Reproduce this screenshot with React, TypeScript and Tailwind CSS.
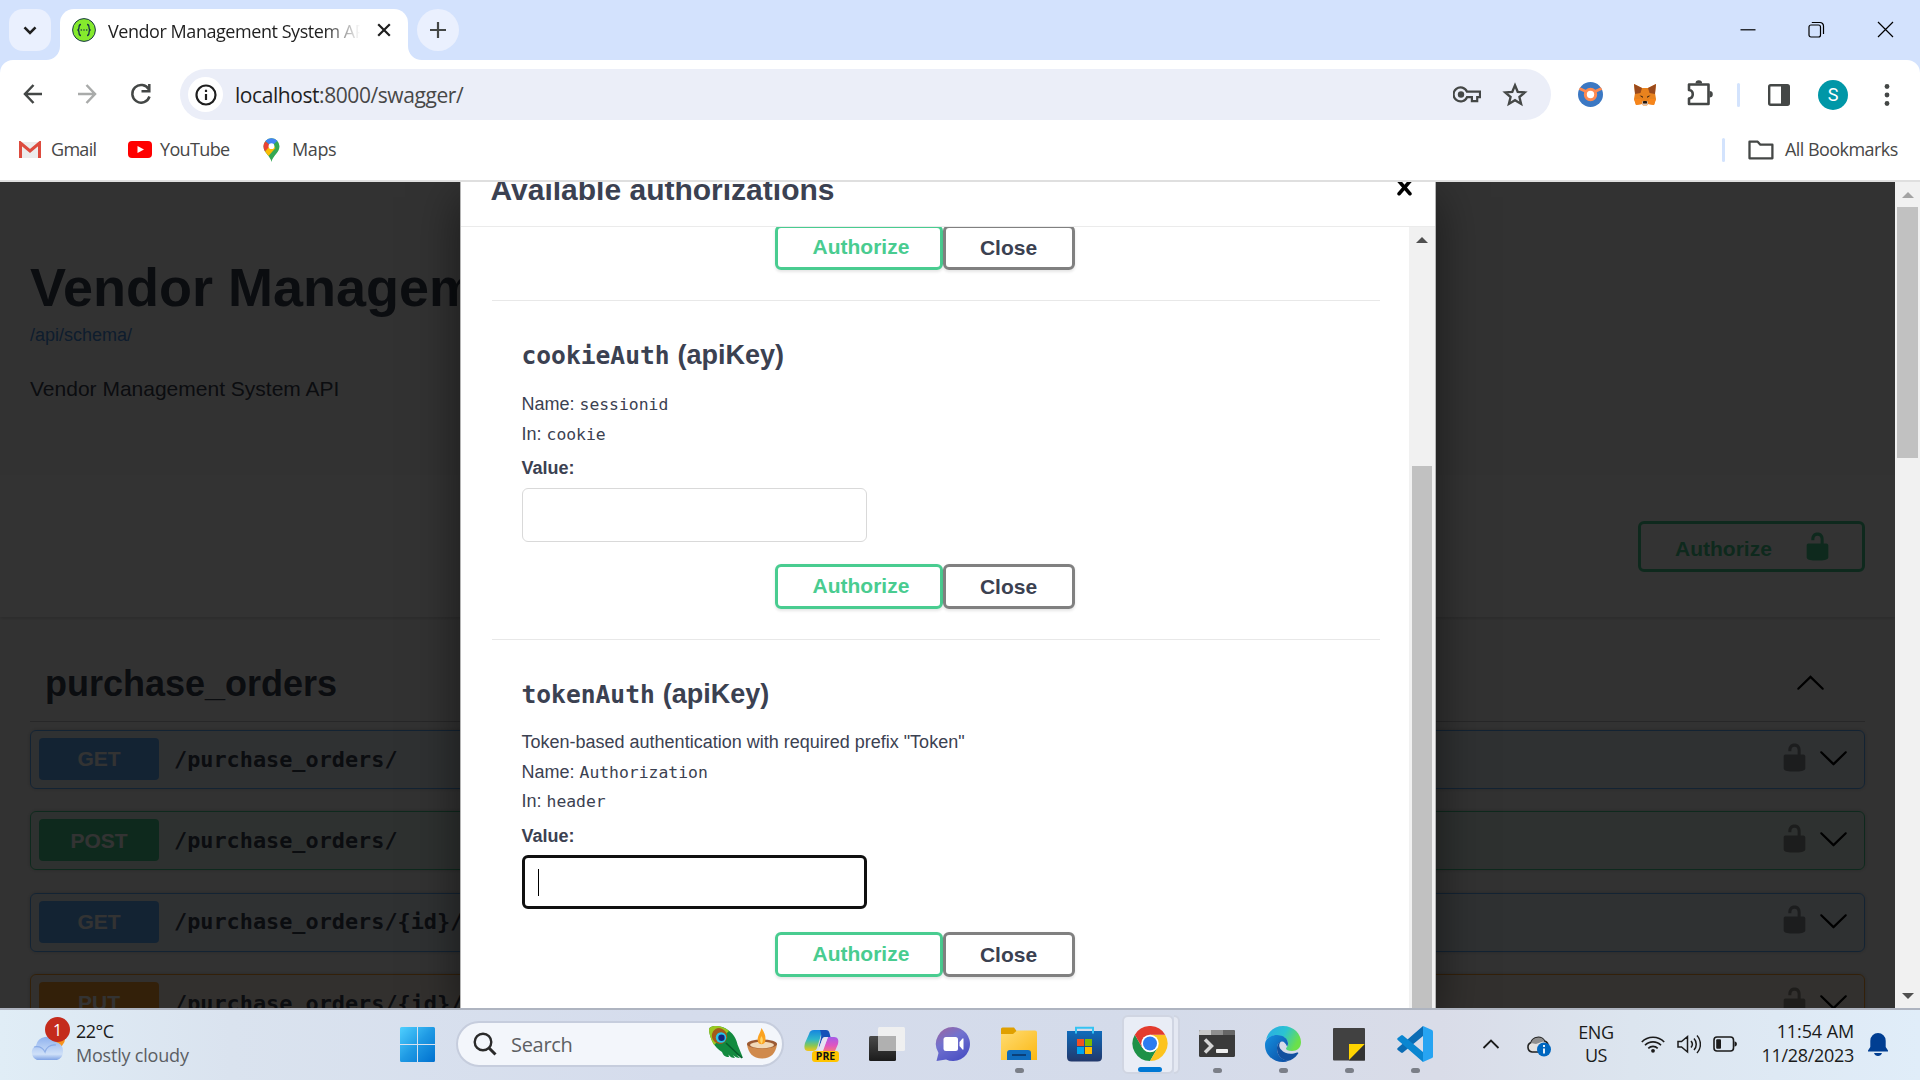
import React from "react";

const LOCK =
  "M15.8 8H14V5.6C14 2.703 12.665 1 10 1 7.334 1 6 2.703 6 5.6V6h2v-.801C8 3.754 8.797 3 10 3c1.203 0 2 .754 2 2.199V8H4c-.553 0-1 .646-1 1.199V17c0 .549.428 1.139.951 1.307l1.197.387C5.672 18.861 6.55 19 7.1 19h5.8c.549 0 1.428-.139 1.951-.307l1.196-.387c.524-.167.953-.757.953-1.306V9.199C17 8.646 16.352 8 15.8 8z";
const ARROW_DOWN =
  "M17.418 6.109c.272-.268.709-.268.979 0s.271.701 0 .969l-7.908 7.83c-.27.268-.707.268-.979 0l-7.908-7.83c-.27-.268-.271-.701 0-.969.271-.268.709-.268.979 0L10 13.25l7.418-7.141z";
const CLOSE =
  "M14.348 14.849c-0.469 0.469-1.229 0.469-1.697 0l-2.651-3.030-2.651 3.029c-0.469 0.469-1.229 0.469-1.697 0-0.469-0.469-0.469-1.229 0-1.697l2.758-3.15-2.759-3.152c-0.469-0.469-0.469-1.228 0-1.697s1.228-0.469 1.697 0l2.652 3.031 2.651-3.031c0.469-0.469 1.228-0.469 1.697 0s0.469 1.229 0 1.697l-2.758 3.152 2.758 3.15c0.469 0.469 0.469 1.229 0 1.698z";

function Glyph({ d, className }: { d: string; className: string }) {
  return (
    <svg viewBox="0 0 20 20" className={className} fill="currentColor">
      <path d={d} />
    </svg>
  );
}

/* ---------- Browser chrome ---------- */

function TabStrip() {
  return (
    <div className="flex h-[60px] bg-[#d3e2fd] pl-[9px] pt-[9px]">
      <div className="flex h-[42px] w-[42px] items-center justify-center rounded-[14px] bg-[#eaf0fe]">
        <svg viewBox="0 0 14 14" className="h-[14px] w-[14px]" fill="none" stroke="#1f1f1f" strokeWidth="2.6">
          <path d="M1.500 4.300 7 9.800l5.500-5.500" />
        </svg>
      </div>
      <div className="flex h-[51px] w-[9px] items-end">
        <svg viewBox="0 0 14 14" className="-ml-[5px] h-[14px] w-[14px] shrink-0" fill="#fff">
          <path d="M14 0v14H0C8 14 14 8 14 0z" />
        </svg>
      </div>
      <div className="flex h-[51px] w-[348px] rounded-t-[14px] bg-white pl-[12px]">
        <svg viewBox="0 0 24 24" className="mt-[9px] h-[24px] w-[24px]">
          <circle cx="12" cy="12" r="11.400" fill="#85ea2d" stroke="#173647" strokeWidth="1" />
          <path
            d="M9 6.500c-2 0-2 1-2 2.700 0 1.600-.2 2.800-1.600 2.800 1.400 0 1.600 1.200 1.600 2.800 0 1.700 0 2.700 2 2.700M15 6.500c2 0 2 1 2 2.700 0 1.600.2 2.800 1.600 2.800-1.400 0-1.600 1.200-1.600 2.800 0 1.700 0 2.700-2 2.700"
            fill="none"
            stroke="#173647"
            strokeWidth="1.300"
          />
          <g fill="#173647">
            <circle cx="9.300" cy="12" r=".8" />
            <circle cx="12" cy="12" r=".8" />
            <circle cx="14.700" cy="12" r=".8" />
          </g>
        </svg>
        <div className="ml-[12px] mt-[7px] h-[30px] w-[252px] overflow-hidden whitespace-nowrap bg-linear-to-r from-[#1f1f1f] from-86% to-transparent to-100% bg-clip-text text-[18px] leading-[30px] tracking-[-0.45px] text-transparent">
          Vendor Management System API
        </div>
        <svg viewBox="0 0 14 14" className="ml-[17px] mt-[14px] h-[14px] w-[14px]" stroke="#1f1f1f" strokeWidth="2.200">
          <path d="M1.200 1.200l11.600 11.600M12.800 1.200 1.200 12.800" />
        </svg>
      </div>
      <div className="flex h-[51px] w-[9px] items-end">
        <svg viewBox="0 0 14 14" className="h-[14px] w-[14px] shrink-0" fill="#fff">
          <path d="M0 0v14h14C6 14 0 8 0 0z" />
        </svg>
      </div>
      <div className="flex h-[42px] w-[42px] items-center justify-center rounded-full bg-[#eaf0fe]">
        <svg viewBox="0 0 16 16" className="h-[16px] w-[16px]" stroke="#444746" strokeWidth="2.200">
          <path d="M8 0v16M0 8h16" />
        </svg>
      </div>
      <div className="ml-auto mt-[12px] flex h-[18px] gap-[52px] pr-[26px]">
        <svg viewBox="0 0 17 17" className="h-[17px] w-[17px]" stroke="#000" strokeWidth="1.200">
          <path d="M1.500 8.800h15" />
        </svg>
        <svg viewBox="0 0 17 17" className="h-[17px] w-[17px]" fill="none" stroke="#000" strokeWidth="1.200">
          <rect x="1" y="4" width="11.500" height="12" rx="2" />
          <path d="M3.800 1.500H12a3.500 3.500 0 0 1 3.500 3.500v8" />
        </svg>
        <svg viewBox="0 0 17 17" className="h-[17px] w-[17px]" stroke="#000" strokeWidth="1.200">
          <path d="M1 1l15 15M16 1 1 16" />
        </svg>
      </div>
    </div>
  );
}

function Fox() {
  return (
    <svg viewBox="0 0 24 24" className="h-[24px] w-[24px]">
      <path d="M1 1l8 4h6l8-4-1 9 1 6-2 6-6-1-1 1.500h-4L9 21l-6 1-2-6 1-6z" fill="#e8821e" />
      <path d="M1 1l8 4-1.500 5L2 11zM23 1l-8 4 1.500 5 5.500 1z" fill="#9a4a1c" />
      <path d="M1 16h7l1 5-6 1zM23 16h-7l-1 5 6 1z" fill="#f6851b" />
      <path d="M6.500 12.500l3 .5.500 2zM17.500 12.500l-3 .5-.5 2z" fill="#3b2412" />
      <path d="M9 19l1-1h4l1 1-.5 3h-5z" fill="#d7c1b3" />
      <path d="M9.800 19l.7-1h3l.7 1-.4 1.500h-3.600z" fill="#20160f" />
    </svg>
  );
}

function Toolbar() {
  return (
    <div className="flex h-[60px] items-center bg-white pt-[9px] text-[#444746]">
      <svg viewBox="0 0 20 22" className="-mt-[1px] ml-[23px] h-[22px] w-[20px]" fill="none" stroke="currentColor" strokeWidth="2.500">
        <path d="M19 11H2.500M10.500 2 2 11l8.500 9" />
      </svg>
      <svg viewBox="0 0 20 22" className="-mt-[1px] ml-[34px] h-[22px] w-[20px] text-[#a9abaa]" fill="none" stroke="currentColor" strokeWidth="2.500">
        <path d="M1 11h16.500M9.500 2 18 11l-8.500 9" />
      </svg>
      <svg viewBox="0 0 22 22" className="-mt-[1px] ml-[33px] h-[22px] w-[22px]" fill="none" stroke="currentColor" strokeWidth="2.500">
        <path d="M18.800 6.500A8.800 8.800 0 1 0 19.500 13.500" />
        <path d="M19.300 1v7.300h-7.800" />
      </svg>
      <div className="ml-[28px] flex h-[51px] w-[1371px] items-center rounded-full bg-[#ebeef8]">
        <div className="ml-[8px] flex h-[35px] w-[35px] items-center justify-center rounded-full bg-white">
          <svg viewBox="0 0 22 22" className="h-[22px] w-[22px]">
            <circle cx="11" cy="11" r="9.500" fill="none" stroke="#1f1f1f" strokeWidth="2.200" />
            <path d="M11 10v6M11 5.800v2.200" stroke="#1f1f1f" strokeWidth="2.200" />
          </svg>
        </div>
        <div className="ml-[12px] whitespace-nowrap text-[21px] leading-[30px] tracking-[-0.43px] text-[#474747]">
          <span className="text-[#1f1f1f]">localhost</span>:8000/swagger/
        </div>
        <svg viewBox="0 0 28 17" className="ml-auto h-[17px] w-[28px]" fill="none" stroke="currentColor" strokeWidth="2.200">
          <path d="M14 5.700h13v5.500h-2.800v4h-5.300v-4H14A7 7 0 1 1 14 5.700z" />
          <circle cx="8" cy="8.500" r="3.200" fill="currentColor" stroke="none" />
        </svg>
        <svg viewBox="0 0 26 25" className="-mt-[1px] ml-[21px] mr-[23px] h-[25px] w-[26px] shrink-0" fill="none" stroke="currentColor" strokeWidth="2.300">
          <path d="M13 3.200l2.700 6.600 7.100.6-5.400 4.600 1.700 6.900L13 18.200l-6.100 3.700 1.700-6.900-5.400-4.600 7.100-.6z" />
        </svg>
      </div>
      <svg viewBox="0 0 25 25" className="ml-[27px] h-[25px] w-[25px]">
        <circle cx="12.500" cy="12.500" r="12.500" fill="#3b78c3" />
        <path d="M1.500 6.500 8 9.500M23.500 6.500 17 9.500" stroke="#ff8a50" strokeWidth="3" />
        <circle cx="12.500" cy="12.500" r="5.200" fill="#fff" stroke="#ff8a50" strokeWidth="3" />
      </svg>
      <div className="ml-[30px]">
        <Fox />
      </div>
      <svg viewBox="0 0 27 27" className="-mt-[4px] ml-[30px] h-[27px] w-[27px]">
        <path d="M2 5.500h19.500V25H2v-5.500c5-.5 5-8 0-8.500z" fill="none" stroke="#444746" strokeWidth="2.600" strokeLinejoin="round" />
        <path d="M8.500 4.500a3.300 3.300 0 0 1 6.600 0zM22.500 12a3.300 3.300 0 0 1 0 6.600z" fill="#444746" />
      </svg>
      <div className="ml-[23px] h-[24px] w-[3px] rounded-full bg-[#d3e3fd]" />
      <svg viewBox="0 0 22 22" className="ml-[28px] h-[22px] w-[22px]">
        <rect x="1.200" y="1.200" width="19.600" height="19.600" rx="1.500" fill="none" stroke="#444746" strokeWidth="2.400" />
        <path d="M13 1h8v20h-8z" fill="#444746" />
      </svg>
      <div className="ml-[28px] flex h-[30px] w-[30px] items-center justify-center rounded-full bg-[#0097a7] font-[Roboto] text-[18px] text-white">
        S
      </div>
      <svg viewBox="0 0 6 22" className="ml-[36px] h-[22px] w-[6px]" fill="currentColor">
        <circle cx="3" cy="2.500" r="2.400" />
        <circle cx="3" cy="11" r="2.400" />
        <circle cx="3" cy="19.500" r="2.400" />
      </svg>
    </div>
  );
}

function Bookmarks() {
  return (
    <div className="flex h-[62px] items-center border-b-2 border-[#dfdfdf] bg-white pb-[1px] text-[18px] leading-[28px] text-[#474747]">
      <svg viewBox="0 0 24 18" className="ml-[18px] h-[18px] w-[24px]">
        <path d="M1 1h22v16H1z" fill="#ececec" />
        <path d="M2.500 17V2L12 10l9.500-8v15" fill="none" stroke="#dd4b3e" strokeWidth="3" />
      </svg>
      <span className="-mt-[2px] ml-[9px] w-[46px] whitespace-nowrap tracking-[-0.700px]">Gmail</span>
      <svg viewBox="0 0 24 17" className="ml-[31px] h-[17px] w-[24px]">
        <rect width="24" height="17" rx="4" fill="#f00" />
        <path d="M9.500 5l6.500 3.500-6.500 3.500z" fill="#fff" />
      </svg>
      <span className="-mt-[2px] ml-[8px] w-[69px] whitespace-nowrap tracking-[-0.650px]">YouTube</span>
      <svg viewBox="0 0 17 24" className="ml-[34px] h-[24px] w-[17px]">
        <path d="M8.500 24C7.500 18 .5 15 .5 8.300a8 8 0 0 1 16 0C16.500 15 9.500 18 8.500 24z" fill="#34a853" />
        <path d="M.5 8.300A8 8 0 0 1 2.400 3.200L8.500 8.300 2 13.400A9 9 0 0 1 .5 8.300z" fill="#ea4335" />
        <path d="M2.100 13.500 8.500 6l4 4-7 8z" fill="#fbbc04" />
        <path d="M2.400 3.100A8 8 0 0 1 14.400 2.800L8.500 8.300z" fill="#4285f4" />
        <circle cx="8.500" cy="8.200" r="2.900" fill="#fff" />
      </svg>
      <span className="-mt-[2px] ml-[12px] whitespace-nowrap tracking-[-0.400px]">Maps</span>
      <div className="ml-auto h-[24px] w-[3px] rounded-full bg-[#d3e3fd]" />
      <svg viewBox="0 0 26 20" className="ml-[23px] h-[20px] w-[26px]" fill="none" stroke="#444746" strokeWidth="2.300" strokeLinejoin="round">
        <path d="M1.500 1.700h8.200l2.700 3h12v13.600h-22.900z" />
      </svg>
      <span className="-mt-[2px] ml-[11px] mr-[22px] w-[113px] whitespace-nowrap tracking-[-0.550px]">All Bookmarks</span>
    </div>
  );
}

/* ---------- API documentation page ---------- */

const METHODS = {
  GET: { row: "border-[#61affe] bg-[#61affe]/10", badge: "bg-[#61affe]" },
  POST: { row: "border-[#49cc90] bg-[#49cc90]/10", badge: "bg-[#49cc90]" },
  PUT: { row: "border-[#fca130] bg-[#fca130]/10", badge: "bg-[#fca130]" },
} as const;

function Operation({ method, path }: { method: keyof typeof METHODS; path: string }) {
  const m = METHODS[method];
  return (
    <div className={`mb-[22.4px] flex h-[59px] shrink-0 items-center rounded-[6px] border-[1.5px] pl-[8px] shadow-[0_0_4px_rgba(0,0,0,0.19)] ${m.row}`}>
      <div className={`-mt-[1px] flex h-[42px] w-[120px] items-center justify-center rounded-[4px] text-[21px] font-bold text-white ${m.badge}`}>
        {method}
      </div>
      <div className="ml-[15px] mt-[1px] font-['DejaVu_Sans_Mono',monospace] text-[21.850px] font-bold text-[#3b4151]">{path}</div>
      <Glyph d={LOCK} className="-mt-[5px] ml-auto mr-px h-[31px] w-[31px] text-black/40" />
      <Glyph d={ARROW_DOWN} className="-mt-[4px] ml-[7px] mr-[15px] h-[31px] w-[31px] text-black" />
    </div>
  );
}

function ApiDocs() {
  return (
    <div className="flex h-full flex-col bg-[#fafafa] font-['Liberation_Sans',Arial,sans-serif] text-[#3b4151]">
      <div className="px-[30px] pt-[75px]">
        <h2 className="text-[54px] font-bold leading-[60px]">Vendor Management System API</h2>
        <div className="mt-[6px] text-[18px] leading-[24px] text-[#4990e2]">/api/schema/</div>
        <p className="mt-[27px] text-[21px] leading-[30px]">Vendor Management System API</p>
      </div>
      <div className="mt-[71px] flex h-[142px] shrink-0 items-start justify-end bg-white pr-[30px] pt-[46px] shadow-[0_1.5px_3px_rgba(0,0,0,0.15)]">
        <div className="flex h-[51px] w-[227px] items-center rounded-[6px] border-[3px] border-[#49cc90] pl-[34px] text-[21px] font-bold text-[#49cc90]">
          <span className="mt-[4px] w-[97px]">Authorize</span>
          <Glyph d={LOCK} className="ml-[30px] h-[31px] w-[31px]" />
        </div>
      </div>
      <div className="flex flex-col px-[30px] pt-[38px]">
        <div className="flex h-[67px] shrink-0 items-start justify-between border-b-[1.5px] border-[#3b4151]/30 pl-[15px] pr-[39px]">
          <h3 className="mt-[8px] text-[36px] font-bold leading-[42px]">purchase_orders</h3>
          <Glyph d={ARROW_DOWN} className="mt-[13px] h-[31px] w-[31px] rotate-180 text-black" />
        </div>
        <div className="mt-[8px] flex flex-col">
          <Operation method="GET" path="/purchase_orders/" />
          <Operation method="POST" path="/purchase_orders/" />
          <Operation method="GET" path="/purchase_orders/{id}/" />
          <Operation method="PUT" path="/purchase_orders/{id}/" />
        </div>
      </div>
    </div>
  );
}

function DialogButtons({ className }: { className: string }) {
  return (
    <div className={`ml-[253px] flex h-[45px] text-[21px] font-bold ${className}`}>
      <div className="flex h-[45px] w-[168px] items-center rounded-[6px] border-[3px] border-[#49cc90] pb-[2px] pl-[35px] text-[#49cc90] shadow-[0_1.5px_3px_rgba(0,0,0,0.1)]">
        Authorize
      </div>
      <div className="flex h-[45px] w-[132px] items-center justify-center rounded-[6px] border-[3px] border-[#808080] shadow-[0_1.5px_3px_rgba(0,0,0,0.1)]">
        Close
      </div>
    </div>
  );
}

function Mono({ children }: { children: React.ReactNode }) {
  return <span className="ml-[5px] font-['DejaVu_Sans_Mono',monospace] text-[16.400px]">{children}</span>;
}

function SchemeTitle({ name }: { name: string }) {
  return (
    <h4 className="flex h-[36px] items-baseline text-[27px] font-bold leading-[36px]">
      <span className="font-['DejaVu_Sans_Mono',monospace] text-[24.600px]">{name}</span>
      <span className="ml-[8px]">(apiKey)</span>
    </h4>
  );
}

function AuthDialog() {
  return (
    <div className="flex h-full w-[976px] flex-col overflow-hidden border-x border-[#b5b5b5] bg-white text-[#3b4151] shadow-[0_15px_45px_rgba(0,0,0,0.5)]">
      <div className="flex h-[45px] shrink-0 items-start justify-between border-b border-[#ebebeb] pl-[30px] pr-[15px]">
        <h3 className="-mt-[10px] text-[30px] font-bold leading-[36px]">Available authorizations</h3>
        <Glyph d={CLOSE} className="-mt-[10px] h-[31px] w-[31px] text-black" />
      </div>
      <div className="flex min-h-0 flex-1">
        <div className="flex-1 overflow-hidden pl-[31px] pr-[29px] text-[18px] leading-[30px]">
          <section className="flow-root h-[74px] border-b border-[#e8e8e8] pl-[30px]">
            <DialogButtons className="-mt-[2px]" />
          </section>
          <section className="h-[339px] border-b border-[#e8e8e8] pl-[30px] pt-[36px]">
            <SchemeTitle name="cookieAuth" />
            <p className="mt-[16px]">Name:<Mono>sessionid</Mono></p>
            <p className="-mt-[1px]">In:<Mono>cookie</Mono></p>
            <p className="mt-[3px] font-bold">Value:</p>
            <div className="mt-[5px] h-[54px] w-[345px] rounded-[6px] border-[1.500px] border-[#d9d9d9]" />
            <DialogButtons className="mt-[22px]" />
          </section>
          <section className="pl-[30px] pt-[36px]">
            <SchemeTitle name="tokenAuth" />
            <p className="mt-[15px]">Token-based authentication with required prefix "Token"</p>
            <p>Name:<Mono>Authorization</Mono></p>
            <p className="-mt-[2px]">In:<Mono>header</Mono></p>
            <p className="mt-[4px] font-bold">Value:</p>
            <div className="mt-[4px] flex h-[54px] w-[345px] items-center rounded-[6px] border-[3px] border-[#101010] pl-[13px]">
              <div className="h-[27px] w-[1px] bg-black" />
            </div>
            <DialogButtons className="mt-[23px]" />
          </section>
        </div>
        <div className="flex w-[26px] flex-col items-center bg-[#f1f1f1]">
          <div className="mt-[10px] h-0 w-0 border-x-[6px] border-b-[6px] border-x-transparent border-b-[#505050]" />
          <div className="mt-[223px] w-[20px] flex-1 bg-[#c1c1c1]" />
        </div>
      </div>
    </div>
  );
}

function Viewport() {
  return (
    <div className="flex h-[826px] overflow-hidden">
      <div className="relative h-full w-[1895px] overflow-hidden">
        <ApiDocs />
        <div className="absolute inset-0 flex justify-center bg-black/80 font-['Liberation_Sans',Arial,sans-serif]">
          <AuthDialog />
        </div>
      </div>
      <div className="flex w-[25px] flex-col items-center bg-[#f1f1f1]">
        <div className="mt-[10px] h-0 w-0 border-x-[6px] border-b-[6px] border-x-transparent border-b-[#a3a3a3]" />
        <div className="mt-[9px] h-[251px] w-[21px] bg-[#c1c1c1]" />
        <div className="mb-[9px] mt-auto h-0 w-0 border-x-[6px] border-t-[6px] border-x-transparent border-t-[#505050]" />
      </div>
    </div>
  );
}

/* ---------- Taskbar ---------- */

function Weather() {
  return (
    <div className="flex w-[400px] pl-[28px] pt-[5px]">
      <div className="relative h-[48px] w-[38px]">
        <svg viewBox="0 0 38 48" className="h-[48px] w-[38px]">
          <defs>
            <linearGradient id="cloud" x1="0" y1="0" x2="0" y2="1">
              <stop offset="0" stopColor="#8fb2ee" />
              <stop offset=".75" stopColor="#cfe0f8" />
              <stop offset="1" stopColor="#7fa3e4" />
            </linearGradient>
          </defs>
          <circle cx="28" cy="24" r="9" fill="#f7941d" />
          <path d="M9 45a8 8 0 0 1-1-14.500A11 11 0 0 1 28 27a9.500 9.500 0 0 1 1 18z" fill="url(#cloud)" />
          <path d="M6 32c5-1 9 1 11 5 1-4 5-8 11-7" fill="none" stroke="#6d94dd" strokeWidth="1.200" opacity=".6" />
        </svg>
        <div className="absolute left-[17px] top-[2px] flex h-[25px] w-[25px] items-center justify-center rounded-full bg-[#c42b1c] text-[16px] text-white">
          1
        </div>
      </div>
      <div className="ml-[10px] pt-[4px] text-[18px] leading-[24px]">
        <div className="tracking-[-0.500px] text-[#1b1b1b]">22°C</div>
        <div className="whitespace-nowrap tracking-[-0.200px] text-[#5b5e63]">Mostly cloudy</div>
      </div>
    </div>
  );
}

function StartLogo() {
  return (
    <svg viewBox="0 0 35 35" className="h-[35px] w-[35px]">
      <defs>
        <linearGradient id="win" x1="0" y1="0" x2="1" y2="1">
          <stop offset="0" stopColor="#4fd0ff" />
          <stop offset=".5" stopColor="#1f9ae4" />
          <stop offset="1" stopColor="#0070cf" />
        </linearGradient>
      </defs>
      <path d="M0 1.500Q0 0 1.500 0H17v17H0zM18 0h15.500Q35 0 35 1.500V17H18zM0 18h17v17H1.500Q0 35 0 33.500zM18 18h17v15.500Q35 35 33.500 35H18z" fill="url(#win)" />
    </svg>
  );
}

function SearchBox() {
  return (
    <div className="flex h-[46px] w-[328px] items-center rounded-full border-2 border-[#c6cddd] bg-[#f3f6fb] pl-[15px]">
      <svg viewBox="0 0 24 24" className="h-[24px] w-[24px]" fill="none" stroke="#2a2a2a" strokeWidth="2.400">
        <circle cx="10" cy="10" r="8.300" />
        <path d="M16 16l6.500 6.500" strokeWidth="3" />
      </svg>
      <span className="ml-[14px] mt-[1px] text-[20px] tracking-[-0.300px] text-[#5d5f63]">Search</span>
      <svg viewBox="0 0 34 34" className="-mt-[3px] ml-auto h-[34px] w-[34px]">
        <path
          d="M0 4C0 1 3 0 7 0c7 0 14 4 18 10 2 3 3 6 3.500 8.500L32 27l2 5-6-3 3 3c-3 0-5-1-7-3l2 3c-3 0-5-1-6.500-3.500L20 31c-4 0-6-2-7-5C5 21 1 13 0 4z"
          fill="#128a3f"
        />
        <path d="M0 4C0 1 3 0 7 0c5 0 10 2 13 5L5 19C2 14 .5 9 0 4z" fill="#9cc820" />
        <ellipse cx="10.500" cy="10" rx="7.500" ry="8" fill="#a35a1a" transform="rotate(-30 10.500 10)" />
        <circle cx="12" cy="11.500" r="5.200" fill="#27c6e8" />
        <circle cx="12.500" cy="11.800" r="3.200" fill="#10257e" />
        <path d="M17 17l16 15" stroke="#075c2b" strokeWidth="1.500" />
      </svg>
      <svg viewBox="0 0 32 32" className="ml-[3px] mr-[4px] h-[32px] w-[32px]">
        <path d="M1 16c1 9 6 14.500 15 14.500S30 25 31 16z" fill="#d08a4c" />
        <ellipse cx="16" cy="16" rx="15" ry="4.500" fill="#9b5a33" />
        <ellipse cx="16" cy="17" rx="12" ry="3.200" fill="#f1d9b8" />
        <path d="M15.500 0c3 5 5 9 3.500 14-1 3-6 3-7 0-1.500-5 2-8 3.500-14z" fill="#fba321" />
        <path d="M15.500 8c1.500 3 2 5 0 8-2-3-1.500-5 0-8z" fill="#ffd76a" />
      </svg>
    </div>
  );
}

function Copilot() {
  return (
    <svg viewBox="0 0 36 36" className="ml-[2px] h-[36px] w-[36px]">
      <defs>
        <linearGradient id="cpA" x1="0" y1="0" x2="0" y2="1">
          <stop offset="0" stopColor="#1685e0" />
          <stop offset=".45" stopColor="#2fb7c9" />
          <stop offset=".75" stopColor="#8cc751" />
          <stop offset="1" stopColor="#f5c518" />
        </linearGradient>
        <linearGradient id="cpB" x1="0" y1="0" x2="0" y2="1">
          <stop offset="0" stopColor="#a45be8" />
          <stop offset=".5" stopColor="#e055c0" />
          <stop offset="1" stopColor="#ff8a5c" />
        </linearGradient>
      </defs>
      <path d="M10 4h12c-3 0-4 2-5 5l-4 13c-.5 2-2 3-4 3H4c-4 0-4-4-3-8L5 8c1-3 2-4 5-4z" fill="url(#cpA)" />
      <path d="M16 4h6c2 0 3 1 3.500 3l1 4h-5c-2 0-3 1-3.500 3l-3 8c0-5 3-10 2-14-.3-2-.5-3-1-4z" fill="#1451b8" />
      <path d="M24 11h6c4 0 5 3 4 7l-3 7c-1 2-2 3-4 3H15c2 0 3-2 3.500-4z" fill="url(#cpB)" />
      <path d="M18 13.500q.7-2.500 3-2.500h3l-5 14h-5z" fill="#e6e4f2" />
      <rect x="8" y="25" width="27" height="11" rx="3" fill="#ffc400" />
      <text x="21.500" y="34.200" textAnchor="middle" fontFamily="'Open Sans',sans-serif" fontWeight="700" fontSize="10.500" fill="#111">PRE</text>
    </svg>
  );
}

function TaskView() {
  return (
    <svg viewBox="0 0 36 36" className="h-[36px] w-[36px]">
      <defs>
        <linearGradient id="tv" x1="0" y1="0" x2="0" y2="1">
          <stop offset="0" stopColor="#4a4a4a" />
          <stop offset="1" stopColor="#1b1b1b" />
        </linearGradient>
      </defs>
      <rect x="0" y="10" width="27" height="25" rx="1.500" fill="url(#tv)" />
      <rect x="9" y="1" width="27" height="24" rx="1.500" fill="#f0f0f0" opacity=".95" />
      <path d="M9 10h18v15H10.500Q9 25 9 23.500z" fill="#b0b0b0" />
    </svg>
  );
}

function Chat() {
  return (
    <svg viewBox="0 0 36 36" className="h-[36px] w-[36px]">
      <defs>
        <linearGradient id="chat" x1="0" y1="0" x2=".6" y2="1">
          <stop offset="0" stopColor="#a0639a" />
          <stop offset=".45" stopColor="#7272cf" />
          <stop offset="1" stopColor="#4d52c4" />
        </linearGradient>
      </defs>
      <path d="M18 1a17 17 0 1 1-7 32.500L1.500 35l2-8A17 17 0 0 1 18 1z" fill="url(#chat)" />
      <rect x="8.500" y="11" width="14.500" height="14" rx="2.500" fill="#fff" />
      <path d="M24.500 16l3-3.500q1-.8 1 .5v10q0 1.300-1 .5l-3-3.500z" fill="#fff" />
    </svg>
  );
}

function Explorer() {
  return (
    <svg viewBox="0 0 36 36" className="h-[36px] w-[36px]">
      <defs>
        <linearGradient id="fold" x1="0" y1="0" x2="1" y2="1">
          <stop offset="0" stopColor="#ffdc73" />
          <stop offset="1" stopColor="#fbb813" />
        </linearGradient>
      </defs>
      <path d="M0 3q0-1.500 1.500-1.500H13l3 4-3 4H0z" fill="#e0a000" />
      <path d="M0 8h12l4-3.500h18q2 0 2 2V34H0z" fill="url(#fold)" />
      <path d="M6 34v-7q0-3 3-3h18q3 0 3 3v7z" fill="#0f6cbd" />
      <path d="M11 29h14" stroke="#0a3f78" strokeWidth="2" />
    </svg>
  );
}

function Store() {
  return (
    <svg viewBox="0 0 36 36" className="h-[36px] w-[36px]">
      <defs>
        <linearGradient id="store" x1="0" y1="0" x2="0" y2="1">
          <stop offset="0" stopColor="#0f6bbb" />
          <stop offset="1" stopColor="#22386b" />
        </linearGradient>
      </defs>
      <path d="M0 5h35v26q0 4.500-4.500 4.500h-26Q0 35.500 0 31z" fill="url(#store)" />
      <path d="M9 7.500V1.800h17V7.500" fill="none" stroke="#35c3f3" strokeWidth="2" />
      <path d="M10 13h7v7h-7z" fill="#f25022" />
      <path d="M18 13h7v7h-7z" fill="#7fba00" />
      <path d="M10 21h7v7h-7z" fill="#00a4ef" />
      <path d="M18 21h7v7h-7z" fill="#ffb900" />
    </svg>
  );
}

function Chrome() {
  return (
    <svg viewBox="0 0 36 36" className="ml-[4px] h-[36px] w-[36px]">
      <path d="M2.400 9A18 18 0 0 0 18 36l7.800-13.500H10.200z" fill="#1e9147" />
      <path d="M33.600 9A18 18 0 0 1 18 36l7.800-13.500L18 9z" fill="#fcc31e" />
      <path d="M18 9h15.600A18 18 0 0 0 2.400 9l7.800 13.500z" fill="#e33b2e" />
      <circle cx="18" cy="18" r="9" fill="#fff" />
      <circle cx="18" cy="18" r="7.200" fill="#2d7cf0" />
    </svg>
  );
}

function Terminal() {
  return (
    <svg viewBox="0 0 36 36" className="h-[36px] w-[36px]">
      <rect y="4" width="36" height="27" rx="1.500" fill="#3a3a3a" />
      <path d="M1.500 4H12v5H0V5.500Q0 4 1.500 4z" fill="#c9c9c9" />
      <path d="M12 4h12v5H12z" fill="#8f8f8f" />
      <path d="M24 4h10.500Q36 4 36 5.500V9H24z" fill="#666" />
      <path d="M6 13.500l6.500 6.500L6 26.500" fill="none" stroke="#d5d5d5" strokeWidth="3.500" />
      <rect x="17" y="23" width="12" height="4" rx=".8" fill="#efefef" />
    </svg>
  );
}

function Edge() {
  return (
    <svg viewBox="0 0 36 36" className="h-[36px] w-[36px]">
      <defs>
        <linearGradient id="edA" x1="0" y1="0" x2="1" y2=".4">
          <stop offset="0" stopColor="#2aa9e8" />
          <stop offset=".55" stopColor="#2bc3d2" />
          <stop offset="1" stopColor="#6be04a" />
        </linearGradient>
        <linearGradient id="edB" x1="0" y1="0" x2="1" y2="1">
          <stop offset="0" stopColor="#1590e0" />
          <stop offset="1" stopColor="#0b4aa0" />
        </linearGradient>
      </defs>
      <path d="M1 14C3 5 10 0 18 0c11 0 18 8 18 16 0 6-4 9-9 9-4 0-6-1-6-2.500 0-1 2-1.500 2-5C23 13 18 9.500 12 9.500 6 9.500 2 12 1 14z" fill="url(#edA)" />
      <path d="M0 19c0-6 5-10 12-10 6 0 11 3.500 11 8.500 0 2-1 3-1 3-1-3-3-5-5-5-3 0-5 3-5 7 0 6 4 12 12 12-2 1-4 1.500-6 1.500C8 36 0 29 0 19z" fill="url(#edB)" />
      <path d="M12 22.500c0-3.500 1.500-6.500 4-7-2 2-2.500 5 0 8 4 5 11 5 16 3 1-.4 1.800.3 1 1.200C30 32 26 34.500 23 34.800 16 34 12 29 12 22.500z" fill="#12509f" />
    </svg>
  );
}

function Notes() {
  return (
    <svg viewBox="0 0 36 36" className="h-[36px] w-[36px]">
      <rect x="2" y="2" width="32" height="32.500" rx="1" fill="#414141" />
      <path d="M18 18h16L18 34z" fill="#ffd400" />
      <path d="M34 18v16.500H18z" fill="#333" />
    </svg>
  );
}

function Code() {
  return (
    <svg viewBox="0 0 36 36" className="h-[36px] w-[36px]">
      <path d="M26 0v10L6 26.500q-1 .8-2 0L.7 24q-1-1 0-2z" fill="#0b6cb4" />
      <path d="M26 36V26L6 9.500q-1-.8-2 0L.7 12q-1 1 0 2z" fill="#0a86d1" />
      <path d="M26 0l9 4q1 .5 1 1.500v25q0 1-1 1.500l-9 4z" fill="#27a4f2" />
    </svg>
  );
}

function TaskbarApp({ icon, running }: { icon: React.ReactNode; running?: boolean }) {
  return (
    <div className="flex w-[66px] flex-col items-center pt-[16px]">
      {icon}
      {running && <div className="mt-[6px] h-[5px] w-[9px] rounded-full bg-[#7b7f88]" />}
    </div>
  );
}

function Tray() {
  return (
    <div className="ml-auto flex h-full pr-[32px] text-[18px] leading-[24px] text-[#1b1b1b]">
      <svg viewBox="0 0 18 18" className="mt-[25px] h-[18px] w-[18px]" fill="none" stroke="#1b1b1b" strokeWidth="1.800">
        <path d="M1.500 13 9 5.500l7.500 7.500" />
      </svg>
      <svg viewBox="0 0 25 22" className="ml-[26px] mt-[25px] h-[22px] w-[25px]">
        <path d="M6 17A5 5 0 0 1 5 7.500 7.500 7.500 0 0 1 18.500 6 5.500 5.500 0 0 1 22 12l-6 5z" fill="#e2e2e2" stroke="#222" strokeWidth="1.600" />
        <path d="M5 8A7.500 7.500 0 0 1 18.500 6L10 9z" fill="#8e8e8e" />
        <circle cx="18" cy="14.500" r="7" fill="#0067c0" />
        <path d="M18 13.500v5M18 10v2" stroke="#fff" strokeWidth="1.800" />
      </svg>
      <div className="ml-[19px] w-[52px] pt-[11px] text-center leading-[23px] tracking-[-0.400px]">
        <div>ENG</div>
        <div>US</div>
      </div>
      <svg viewBox="0 0 24 18" className="ml-[19px] mt-[25px] h-[18px] w-[24px]" fill="none" stroke="#1b1b1b" strokeWidth="1.600">
        <path d="M.8 7a15.500 15.500 0 0 1 22.400 0M4 10.300a11 11 0 0 1 16 0M7.300 13.400a6.500 6.500 0 0 1 9.400 0" />
        <circle cx="12" cy="15.800" r="1.900" fill="#1b1b1b" stroke="none" />
      </svg>
      <svg viewBox="0 0 24 20" className="ml-[12px] mt-[24px] h-[20px] w-[24px]" fill="none" stroke="#1b1b1b" strokeWidth="1.500">
        <path d="M1 7.500v5.500h3.500L10.500 18V2.500L4.500 7.500zM14 7a5 5 0 0 1 0 6.500M17 4.500a8.500 8.500 0 0 1 0 11.500M20 1.500a13 13 0 0 1 0 17.500" />
      </svg>
      <svg viewBox="0 0 24 16" className="ml-[12px] mt-[26px] h-[16px] w-[24px]">
        <rect x="1" y="1" width="19.500" height="14" rx="3" fill="none" stroke="#1b1b1b" strokeWidth="1.600" />
        <rect x="3.200" y="3.300" width="4.800" height="9.400" rx="1" fill="#1b1b1b" />
        <path d="M21.500 5.200q2.500.5 2.500 2.800t-2.500 2.800z" fill="#1b1b1b" />
      </svg>
      <div className="ml-[19px] w-[98px] pt-[9px] text-right">
        <div className="whitespace-nowrap tracking-[-0.100px]">11:54 AM</div>
        <div className="whitespace-nowrap tracking-[-0.300px]">11/28/2023</div>
      </div>
      <svg viewBox="0 0 20 24" className="ml-[14px] mt-[23px] h-[24px] w-[20px]" fill="#003e92">
        <path d="M10 0a7.700 7.700 0 0 1 7.700 7.700V14L20 17.500v1H0v-1L2.300 14V7.700A7.700 7.700 0 0 1 10 0zM6 20h8q-1 3-4 3t-4-3z" />
      </svg>
    </div>
  );
}

function Taskbar() {
  return (
    <div className="flex h-[72px] border-t-2 border-[#aeb4c0] bg-[linear-gradient(90deg,#e0edf6_0%,#dae3ef_12%,#d5dcec_35%,#d4dbea_60%,#d9dce8_75%,#dce5ef_85%,#e0edf9_100%)]">
      <Weather />
      <div className="pt-[17px]">
        <StartLogo />
      </div>
      <div className="ml-[21px] pt-[11px]">
        <SearchBox />
      </div>
      <div className="ml-[4px] flex">
        <TaskbarApp icon={<Copilot />} />
        <TaskbarApp icon={<TaskView />} />
        <TaskbarApp icon={<Chat />} />
        <TaskbarApp icon={<Explorer />} running />
        <TaskbarApp icon={<Store />} />
        <div className="flex w-[66px] pl-[4px] pt-[5px]">
          <div className="flex h-[59px] w-[52px] flex-col items-center rounded-[6px] border-2 border-[#d0d5e2] bg-[#e9edf6] pt-[9px]">
            <Chrome />
            <div className="ml-[4px] mt-[6px] h-[5px] w-[24px] shrink-0 rounded-full bg-[#0078d4]" />
          </div>
          <div className="h-[59px] w-[6px] rounded-r-[6px] border-y-2 border-r-2 border-[#d0d5e2] bg-[#e4e8f2]" />
        </div>
        <TaskbarApp icon={<Terminal />} running />
        <TaskbarApp icon={<Edge />} running />
        <TaskbarApp icon={<Notes />} running />
        <TaskbarApp icon={<Code />} running />
      </div>
      <Tray />
    </div>
  );
}

export default function App() {
  return (
    <div className="flex h-[1080px] w-[1920px] flex-col overflow-hidden font-['Open_Sans','Noto_Sans',sans-serif]">
      <TabStrip />
      <div className="bg-[#d3e2fd]">
        <div className="overflow-hidden rounded-t-[13px]">
          <Toolbar />
          <Bookmarks />
        </div>
      </div>
      <Viewport />
      <Taskbar />
    </div>
  );
}
